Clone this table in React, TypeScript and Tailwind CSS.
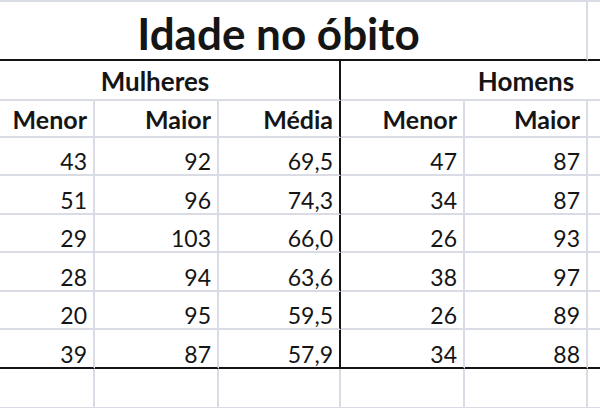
import { ReactNode } from "react";

type Edge = "gray" | "black" | "none";

interface CellProps {
  children?: ReactNode;
  right?: Edge;
  bottom?: Edge;
  bold?: boolean;
  className?: string;
}

const rightEdge: Record<Edge, string> = {
  gray: "border-r-2 border-r-[#d9dce4]",
  black: "border-r-2 border-r-[#141414]",
  none: "border-r-2 border-r-transparent",
};

const bottomEdge: Record<Edge, string> = {
  gray: "border-b-2 border-b-[#d9dce4]",
  black: "border-b-2 border-b-[#141414]",
  none: "border-b-2 border-b-transparent",
};

// One spreadsheet cell, bottom aligned like Excel
const Cell = ({ children, right = "gray", bottom = "gray", bold = false, className = "" }: CellProps) => (
  <div
    className={`flex items-end justify-end pr-[6px] ${bold ? "font-bold text-[25px] leading-[1.2] pb-[2px]" : "font-normal text-[23px] leading-none pb-[1px]"} ${rightEdge[right]} ${bottomEdge[bottom]} ${className}`}
  >
    {children}
  </div>
);

const rows = [
  ["43", "92", "69,5", "47", "87"],
  ["51", "96", "74,3", "34", "87"],
  ["29", "103", "66,0", "26", "93"],
  ["28", "94", "63,6", "38", "97"],
  ["20", "95", "59,5", "26", "89"],
  ["39", "87", "57,9", "34", "88"],
];

export default function App() {
  return (
    <div className="w-[600px] h-[408px] overflow-hidden bg-white text-[#151515]" style={{ fontFamily: "Lato, 'Open Sans', sans-serif" }}>
      <div className="ml-[-29px] w-[740px] border-t-2 border-t-[#d9dce4] grid grid-cols-[124px_124px_122px_124px_123px_123px] grid-rows-[59px_40px_37px_38px_39px_38px_39px_38px_39px_40px]">
        {/* Title row, merged A:E */}
        <div className="col-span-5 flex items-end justify-center pb-[4px] text-[44px] font-bold leading-none border-r-2 border-r-[#d9dce4] border-b-2 border-b-[#141414]">
          Idade no óbito
        </div>
        <Cell bottom="black" />

        {/* Group row */}
        <div className="col-span-3 flex items-end justify-center pb-[2px] text-[26px] font-bold leading-[1.2] border-r-2 border-r-[#141414] border-b-2 border-b-[#d9dce4]">
          Mulheres
        </div>
        <div className="col-span-3 flex items-end justify-center pb-[2px] text-[26px] font-bold leading-[1.2] border-b-2 border-b-[#d9dce4]">
          Homens
        </div>

        {/* Column headers */}
        <Cell bold>Menor</Cell>
        <Cell bold>Maior</Cell>
        <Cell bold right="black">Média</Cell>
        <Cell bold>Menor</Cell>
        <Cell bold>Maior</Cell>
        <Cell bold />

        {/* Data */}
        {rows.map((r, i) => {
          const b: Edge = i === rows.length - 1 ? "black" : "gray";
          return [
            <Cell key={`${i}-0`} bottom={b}>{r[0]}</Cell>,
            <Cell key={`${i}-1`} bottom={b}>{r[1]}</Cell>,
            <Cell key={`${i}-2`} bottom={b} right="black">{r[2]}</Cell>,
            <Cell key={`${i}-3`} bottom={b}>{r[3]}</Cell>,
            <Cell key={`${i}-4`} bottom={b}>{r[4]}</Cell>,
            <Cell key={`${i}-5`} bottom={b} />,
          ];
        })}

        {/* Empty row */}
        <Cell />
        <Cell />
        <Cell />
        <Cell />
        <Cell />
        <Cell />
      </div>
    </div>
  );
}
